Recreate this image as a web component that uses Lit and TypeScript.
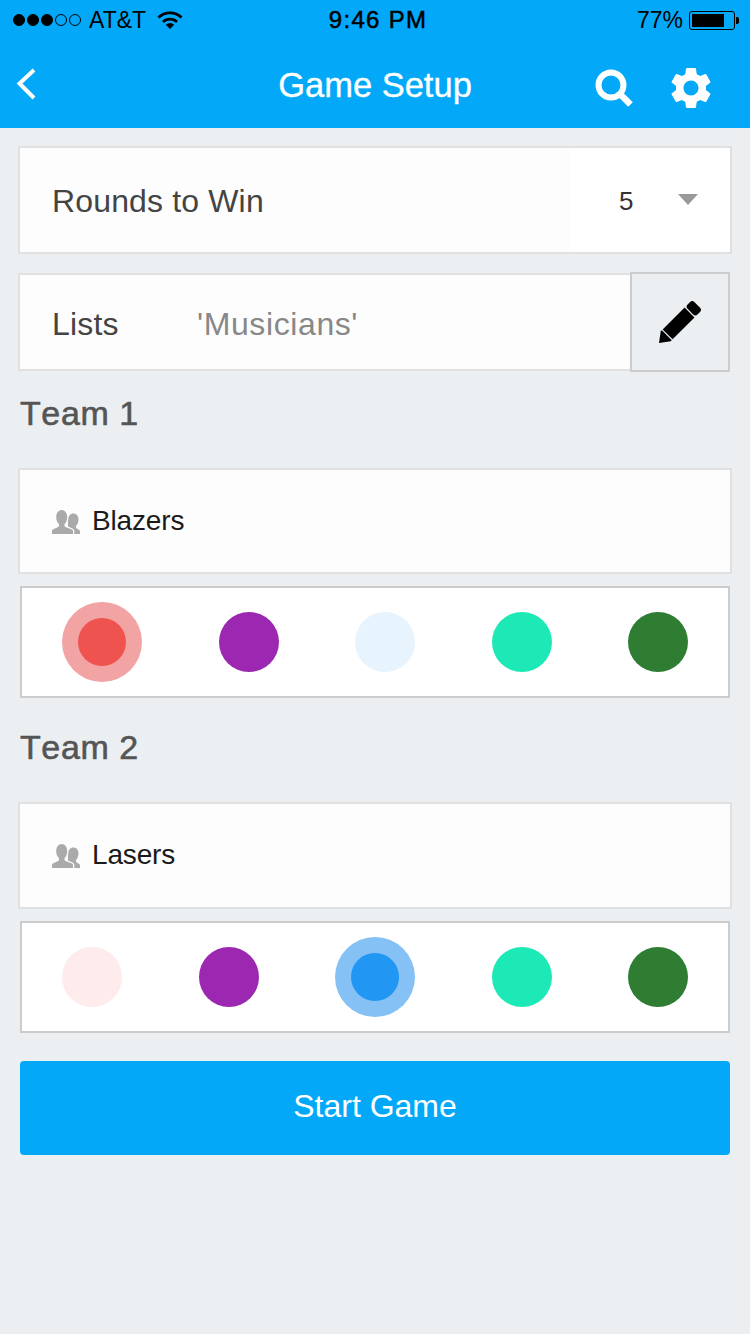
import { LitElement, html, css } from 'lit';
import { customElement, state } from 'lit/decorators.js';

const SWATCHES = [
  { color: '#ef5350', ring: '#f2a3a3', pale: '#fdeceb' },
  { color: '#9c27b0', ring: '#cd93d7', pale: '#f5e9f7' },
  { color: '#2196f3', ring: '#85c1f5', pale: '#e7f3fd' },
  { color: '#1de9b6', ring: '#8ef4da', pale: '#e8fcf7' },
  { color: '#2e7d32', ring: '#96be98', pale: '#eaf2ea' },
];

const peopleIcon = html`
  <svg class="people" width="28" height="24" viewBox="0 0 28 24">
    <path fill="#aaa" d="M16 9.500C16 6 18.500 3.500 21.500 3.500S26.500 6 26.500 9.500C26.500 12 25.500 14.500 24 16v1.500c.5 1.500 3.500 2 4 3.500v3H16V14z"/>
    <path fill="#aaa" stroke="#fdfdfd" stroke-width="2.500" paint-order="stroke" d="M0 24v-3.500C1 18.500 6 18 7 16v-2C5 12.500 4.200 10 4.200 7 4.200 3 6.500 0 9.700 0s5.500 3 5.500 7c0 3-.8 5.500-2.700 7v2c1 2 7.500 2.500 8.500 4.500V24z"/>
  </svg>
`;

@customElement('app-root')
export class AppRoot extends LitElement {
  static styles = css`
    :host {
      display: block;
      min-height: 1334px;
      background: #ebeff2;
      font-family: 'Liberation Sans', Arial, sans-serif;
      color: #444;
    }

    .header {
      background: #03a9f8;
      height: 128px;
      box-sizing: border-box;
    }

    .status {
      height: 40px;
      display: flex;
      align-items: center;
      justify-content: space-between;
      padding: 0 11px 0 13px;
      color: #000;
      font-size: 23px;
    }
    .status > div {
      flex: 1;
      display: flex;
      align-items: center;
    }
    .status .right {
      justify-content: flex-end;
    }
    .clock {
      font-size: 24px;
      letter-spacing: 1.300px;
      -webkit-text-stroke: 0.5px #000;
      margin-left: 4px;
    }
    .dots {
      display: flex;
      gap: 2px;
      margin-right: 8px;
    }
    .dot {
      width: 12px;
      height: 12px;
      border-radius: 50%;
      box-sizing: border-box;
      border: 1px solid #000;
    }
    .dot.on {
      background: #000;
    }
    .wifi {
      margin-left: 11px;
    }
    .battery {
      display: flex;
      align-items: center;
      margin-left: 6px;
    }
    .battery-body {
      width: 46px;
      height: 19px;
      box-sizing: border-box;
      border: 1px solid #000;
      border-radius: 3px;
      padding: 2px;
    }
    .battery-fill {
      height: 100%;
      background: #000;
    }
    .battery-nub {
      width: 3px;
      height: 7px;
      background: #000;
      border-radius: 0 2px 2px 0;
      margin-left: 1px;
    }

    .nav {
      height: 88px;
      display: flex;
      align-items: center;
      padding: 0 39px 0 16px;
      color: #fff;
    }
    .nav-title {
      position: absolute;
      left: 0;
      right: 0;
      text-align: center;
      font-size: 34.500px;
      -webkit-text-stroke: 0.3px #fff;
      margin-top: 2px;
    }
    .nav-gap {
      flex: 1;
    }
    .nav svg {
      display: block;
    }
    .search {
      margin-right: 38px;
      margin-top: 8px;
    }
    .gear {
      margin: 8px -5px 0;
    }

    .row {
      background: #fdfdfd;
      border: 2px solid #e0e0e0;
      box-sizing: border-box;
      display: flex;
      align-items: center;
      font-size: 32px;
    }
    .rounds {
      margin: 18px 18px 0;
      height: 108px;
      padding-left: 32px;
      justify-content: space-between;
      letter-spacing: 0.150px;
    }
    .rounds > span {
      padding-top: 2px;
    }
    .select {
      width: 160px;
      height: 100%;
      background: #fff;
      border-radius: 6px;
      display: flex;
      align-items: center;
      box-sizing: border-box;
      padding: 2px 32px 0 49px;
      justify-content: space-between;
      font-size: 26px;
      color: #333;
    }
    .caret {
      width: 0;
      height: 0;
      border-left: 10px solid transparent;
      border-right: 10px solid transparent;
      border-top: 11px solid #999;
      margin-top: -4px;
    }

    .lists {
      margin: 18px 20px 0 18px;
      display: flex;
      height: 100px;
    }
    .lists .row {
      flex: 1;
      margin: 1px 0;
      padding: 4px 0 0 32px;
      border-right: none;
    }
    .list-label {
      width: 145px;
      letter-spacing: 0.200px;
    }
    .list-value {
      color: #888;
      letter-spacing: 0.600px;
    }
    .edit {
      width: 100px;
      box-sizing: border-box;
      border: 2px solid #ccc;
      background: #ebeff2;
      display: flex;
      align-items: center;
      justify-content: center;
      padding: 0;
    }

    .team + .team {
      margin-top: 8px;
    }
    .team h2 {
      margin: 0;
      padding: 21px 20px 35px;
      font-size: 34px;
      line-height: 40px;
      font-weight: normal;
      font-kerning: none;
      letter-spacing: 0.600px;
      color: #555;
      -webkit-text-stroke: 0.6px #555;
    }
    .name {
      margin: 0 18px;
      height: 106px;
      padding-left: 32px;
      font-size: 28px;
      letter-spacing: -0.150px;
      color: #1a1a1a;
    }
    .team + .team .name {
      height: 107px;
      padding-bottom: 2px;
    }
    .people {
      margin-right: 12px;
      margin-top: 2px;
    }
    .palette {
      margin: 12px 20px 0;
      height: 112px;
      box-sizing: border-box;
      border: 2px solid #ccc;
      background: #fff;
      display: flex;
      align-items: center;
      justify-content: space-between;
      padding: 0 40px;
    }
    .swatch {
      width: 60px;
      height: 60px;
      border-radius: 50%;
      border: none;
      padding: 0;
      cursor: pointer;
      display: flex;
      align-items: center;
      justify-content: center;
    }
    .swatch.selected {
      width: 80px;
      height: 80px;
    }
    .swatch span {
      width: 48px;
      height: 48px;
      border-radius: 50%;
    }

    .start {
      display: block;
      margin: 28px 20px 0;
      width: 710px;
      height: 94px;
      border: none;
      border-radius: 4px;
      background: #03a9f8;
      color: #fff;
      font-family: inherit;
      font-size: 32px;
      padding: 0 0 4px;
      cursor: pointer;
    }
  `;

  @state() teams = [
    { title: 'Team 1', name: 'Blazers', swatch: 0 },
    { title: 'Team 2', name: 'Lasers', swatch: 2 },
  ];

  pickSwatch(teamIndex: number, swatch: number) {
    const taken = this.teams.some((t, i) => i !== teamIndex && t.swatch === swatch);
    if (taken) return;
    this.teams = this.teams.map((t, i) => (i === teamIndex ? { ...t, swatch } : t));
  }

  renderSwatch(teamIndex: number, index: number) {
    const s = SWATCHES[index];
    if (this.teams[teamIndex].swatch === index) {
      return html`<button class="swatch selected" style="background:${s.ring}"><span style="background:${s.color}"></span></button>`;
    }
    const taken = this.teams.some((t, i) => i !== teamIndex && t.swatch === index);
    return html`<button
      class="swatch"
      style="background:${taken ? s.pale : s.color}"
      @click="${() => this.pickSwatch(teamIndex, index)}"
    ></button>`;
  }

  render() {
    return html`
      <div class="header">
        <div class="status">
          <div>
            <span class="dots">
              <i class="dot on"></i><i class="dot on"></i><i class="dot on"></i><i class="dot"></i><i class="dot"></i>
            </span>
            <span>AT&amp;T</span>
            <svg class="wifi" width="26" height="20" viewBox="0 0 26 20">
              <path fill="none" stroke="#000" stroke-width="2.800" d="M1.500 7.500a16.500 16.500 0 0 1 23 0"/>
              <path fill="none" stroke="#000" stroke-width="2.800" d="M6 12a10 10 0 0 1 14 0"/>
              <path fill="#000" d="M8.800 14.800a6 6 0 0 1 8.400 0L13 19z"/>
            </svg>
          </div>
          <span class="clock">9:46 PM</span>
          <div class="right">
            <span>77%</span>
            <span class="battery">
              <span class="battery-body"><div class="battery-fill" style="width:${77 * 1.04}%"></div></span>
              <span class="battery-nub"></span>
            </span>
          </div>
        </div>
        <div class="nav">
          <svg width="20" height="32" viewBox="0 0 20 32">
            <path fill="none" stroke="#fff" stroke-width="4" d="M18 2 3.500 15.500 18 30"/>
          </svg>
          <span class="nav-title">Game Setup</span>
          <span class="nav-gap"></span>
          <svg class="search" width="38" height="38" viewBox="0 0 38 38">
            <circle cx="16" cy="16" r="12.500" fill="none" stroke="#fff" stroke-width="6"/>
            <path stroke="#fff" stroke-width="6.500" d="M25 25 35.500 35.500"/>
          </svg>
          <svg class="gear" width="50" height="50" viewBox="0 0 24 24">
            <path fill="#fff" d="M19.140 12.940c.04-.3.060-.61.060-.94 0-.32-.02-.64-.07-.94l2.030-1.580c.18-.14.230-.41.120-.61l-1.920-3.320c-.12-.22-.37-.29-.59-.22l-2.390.96c-.5-.38-1.030-.7-1.620-.94l-.36-2.540c-.04-.24-.24-.41-.48-.41h-3.840c-.24 0-.43.170-.47.410l-.36 2.540c-.59.240-1.130.570-1.620.940l-2.390-.96c-.22-.08-.47 0-.59.220L2.740 8.870c-.12.210-.08.470.120.610l2.030 1.580c-.05.3-.09.630-.09.940s.020.640.070.940l-2.030 1.580c-.18.140-.23.410-.12.610l1.920 3.320c.12.220.370.290.590.220l2.390-.96c.5.380 1.030.7 1.620.94l.36 2.540c.050.240.240.410.480.410h3.840c.24 0 .44-.17.470-.41l.36-2.540c.59-.24 1.130-.56 1.620-.94l2.390.96c.22.080.47 0 .59-.22l1.920-3.320c.12-.22.070-.47-.12-.61l-2.010-1.580zM12 15.600c-1.980 0-3.600-1.620-3.600-3.600s1.620-3.600 3.600-3.600 3.600 1.620 3.600 3.600-1.620 3.600-3.600 3.600z"/>
          </svg>
        </div>
      </div>

      <div class="row rounds">
        <span>Rounds to Win</span>
        <div class="select"><span>5</span><i class="caret"></i></div>
      </div>

      <div class="lists">
        <div class="row">
          <span class="list-label">Lists</span>
          <span class="list-value">'Musicians'</span>
        </div>
        <button class="edit">
          <svg width="44" height="44" viewBox="0 0 44 44">
            <g transform="translate(1 43) rotate(-45)">
              <path d="M0 0 9.500 -7H11V7H9.500z"/>
              <rect x="12.200" y="-7" width="31" height="14"/>
              <rect x="44.400" y="-7" width="9.600" height="14" rx="3"/>
            </g>
          </svg>
        </button>
      </div>

      ${this.teams.map((team, t) => html`
        <section class="team">
          <h2>${team.title}</h2>
          <div class="row name">${peopleIcon}<span>${team.name}</span></div>
          <div class="palette">
            ${SWATCHES.map((_, i) => this.renderSwatch(t, i))}
          </div>
        </section>
      `)}

      <button class="start">Start Game</button>
    `;
  }
}
